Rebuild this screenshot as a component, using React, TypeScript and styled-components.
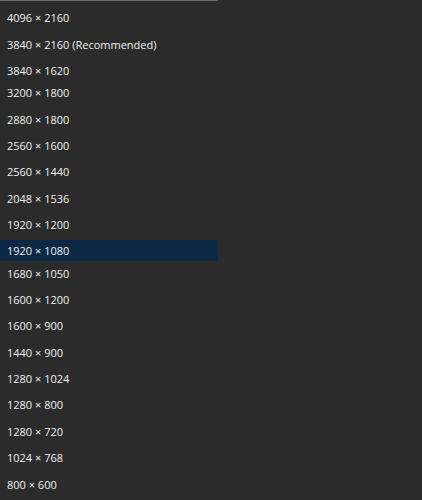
import styled, { createGlobalStyle } from "styled-components";

const GlobalStyle = createGlobalStyle`
  html, body {
    margin: 0;
    padding: 0;
    background-color: #2b2b2b;
  }
`;

const Page = styled.div`
  width: 422px;
  height: 500px;
  background-color: #2b2b2b;
  overflow: hidden;
`;

const List = styled.ul`
  width: 218px;
  margin: 0;
  padding: 6px 0 0;
  list-style: none;
  border-top: 1px solid #6e6e6e;
  font-family: "Open Sans", "Noto Sans", sans-serif;
  font-size: 11px;
  color: #f0f0f0;
`;

const Row = styled.li<{ $selected?: boolean; $gap: number }>`
  height: 21px;
  display: flex;
  align-items: center;
  padding-left: 7px;
  margin-bottom: ${(p) => p.$gap}px;
  background-color: ${(p) => (p.$selected ? "#0b2845" : "transparent")};
  white-space: nowrap;
`;

const modes = [
  { label: "4096 × 2160", gap: 6 },
  { label: "3840 × 2160 (Recommended)", gap: 5 },
  { label: "3840 × 1620", gap: 1 },
  { label: "3200 × 1800", gap: 6 },
  { label: "2880 × 1800", gap: 5 },
  { label: "2560 × 1600", gap: 5 },
  { label: "2560 × 1440", gap: 6 },
  { label: "2048 × 1536", gap: 5 },
  { label: "1920 × 1200", gap: 5 },
  { label: "1920 × 1080", gap: 2, selected: true },
  { label: "1680 × 1050", gap: 5 },
  { label: "1600 × 1200", gap: 5 },
  { label: "1600 × 900", gap: 6 },
  { label: "1440 × 900", gap: 5 },
  { label: "1280 × 1024", gap: 5 },
  { label: "1280 × 800", gap: 6 },
  { label: "1280 × 720", gap: 5 },
  { label: "1024 × 768", gap: 6 },
  { label: "800 × 600", gap: 0 },
];

const App = () => {
  return (
    <>
      <GlobalStyle />
      <Page>
        <List>
          {modes.map((m) => (
            <Row key={m.label} $selected={m.selected} $gap={m.gap}>
              {m.label}
            </Row>
          ))}
        </List>
      </Page>
    </>
  );
};

export default App;
